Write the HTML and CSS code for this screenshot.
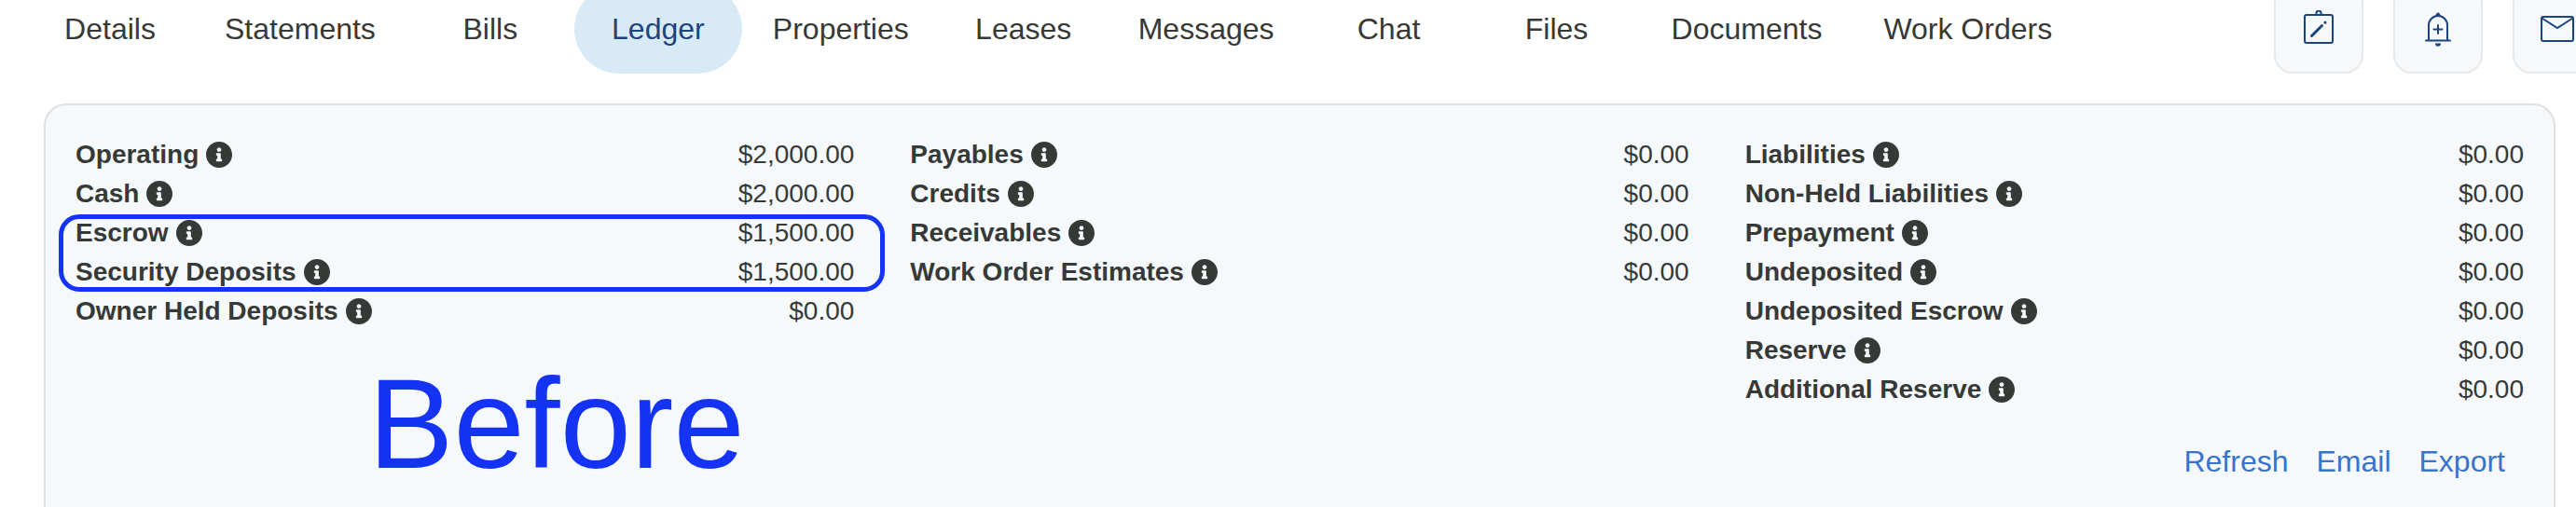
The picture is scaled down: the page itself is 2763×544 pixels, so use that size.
FILE: index.html
```html
<!DOCTYPE html>
<html lang="en">
<head>
    <meta charset="utf-8">
    <title>Ledger</title>
    <link rel="stylesheet" href="styles.css">
</head>
<body>
    <svg class="sprite" aria-hidden="true">
        <symbol id="info" viewBox="8 8 496 496">
            <path fill="currentColor" d="M256 8C119 8 8 119 8 256c0 137 111 248 248 248s248-111 248-248C504 119 393 8 256 8zm0 110c23.2 0 42 18.800 42 42s-18.800 42-42 42-42-18.800-42-42 18.800-42 42-42zm56 254c0 6.600-5.400 12-12 12h-88c-6.600 0-12-5.400-12-12v-24c0-6.600 5.400-12 12-12h12v-64h-12c-6.600 0-12-5.400-12-12v-24c0-6.600 5.400-12 12-12h64c6.600 0 12 5.400 12 12v100h12c6.600 0 12 5.400 12 12v24z"/>
        </symbol>
    </svg>

    <header class="header">
        <nav class="tabs">
            <a class="tab" href="#details">Details</a>
            <a class="tab" href="#statements">Statements</a>
            <a class="tab" href="#bills">Bills</a>
            <a class="tab active" href="#ledger">Ledger</a>
            <a class="tab" href="#properties">Properties</a>
            <a class="tab" href="#leases">Leases</a>
            <a class="tab" href="#messages">Messages</a>
            <a class="tab" href="#chat">Chat</a>
            <a class="tab" href="#files">Files</a>
            <a class="tab" href="#documents">Documents</a>
            <a class="tab" href="#work-orders">Work Orders</a>
        </nav>
        <div class="actions">
            <button class="icon-button" aria-label="Add note">
                <svg viewBox="0 0 40 40" fill="none" stroke="currentColor" stroke-width="2" stroke-linecap="round">
                    <rect x="5" y="5" width="30" height="30" rx="2"/>
                    <path d="M17.5 4.500V3a2.500 2.500 0 0 1 5 0v1.500"/>
                    <path stroke-width="3" d="M12.5 27.500L23.500 16.500M27 13.200V13.100"/>
                </svg>
            </button>
            <button class="icon-button" aria-label="Add reminder">
                <svg viewBox="0 0 40 40" fill="none" stroke="currentColor" stroke-width="2" stroke-linecap="round">
                    <path d="M10 32V16a10 10 0 0 1 20 0v16"/>
                    <path d="M7 32.500h26M20 16v9M15.500 20.500h9"/>
                    <path stroke="none" fill="currentColor" d="M17 6c0-1 1-1.300 1.300-2.200a1.800 1.800 0 0 1 3.400 0c.3.900 1.300 1.200 1.300 2.200zM17 35.500h6a3 3.200 0 0 1-6 0z"/>
                </svg>
            </button>
            <button class="icon-button" aria-label="Send email">
                <svg viewBox="0 0 40 40" fill="none" stroke="currentColor" stroke-width="2">
                    <rect x="3" y="7" width="34" height="26" rx="2"/>
                    <path d="M3.500 8.500L20 19l16.500-10.500"/>
                </svg>
            </button>
        </div>
    </header>

    <main class="card">
        <div class="columns">
            <dl class="column">
                <div class="row"><dt>Operating <svg class="info"><use href="#info"/></svg></dt><dd>$2,000.00</dd></div>
                <div class="row"><dt>Cash <svg class="info"><use href="#info"/></svg></dt><dd>$2,000.00</dd></div>
                <div class="row marked"><dt>Escrow <svg class="info"><use href="#info"/></svg></dt><dd>$1,500.00</dd></div>
                <div class="row"><dt>Security Deposits <svg class="info"><use href="#info"/></svg></dt><dd>$1,500.00</dd></div>
                <div class="row"><dt>Owner Held Deposits <svg class="info"><use href="#info"/></svg></dt><dd>$0.00</dd></div>
            </dl>
            <dl class="column">
                <div class="row"><dt>Payables <svg class="info"><use href="#info"/></svg></dt><dd>$0.00</dd></div>
                <div class="row"><dt>Credits <svg class="info"><use href="#info"/></svg></dt><dd>$0.00</dd></div>
                <div class="row"><dt>Receivables <svg class="info"><use href="#info"/></svg></dt><dd>$0.00</dd></div>
                <div class="row"><dt>Work Order Estimates <svg class="info"><use href="#info"/></svg></dt><dd>$0.00</dd></div>
            </dl>
            <dl class="column">
                <div class="row"><dt>Liabilities <svg class="info"><use href="#info"/></svg></dt><dd>$0.00</dd></div>
                <div class="row"><dt>Non-Held Liabilities <svg class="info"><use href="#info"/></svg></dt><dd>$0.00</dd></div>
                <div class="row"><dt>Prepayment <svg class="info"><use href="#info"/></svg></dt><dd>$0.00</dd></div>
                <div class="row"><dt>Undeposited <svg class="info"><use href="#info"/></svg></dt><dd>$0.00</dd></div>
                <div class="row"><dt>Undeposited Escrow <svg class="info"><use href="#info"/></svg></dt><dd>$0.00</dd></div>
                <div class="row"><dt>Reserve <svg class="info"><use href="#info"/></svg></dt><dd>$0.00</dd></div>
                <div class="row"><dt>Additional Reserve <svg class="info"><use href="#info"/></svg></dt><dd>$0.00</dd></div>
            </dl>
        </div>
        <div class="links">
            <button>Refresh</button>
            <button>Email</button>
            <button>Export</button>
        </div>
        <div class="note">Before</div>
    </main>
</body>
</html>
```

FILE: styles.css
```css
*,
*::after {
    box-sizing: border-box;
    margin: 0;
    padding: 0;
}

body {
    height: 100vh;
    overflow: hidden;
    background: #fff;
    color: #373936;
    font-family: "Liberation Sans", Arial, sans-serif;
}

.sprite {
    position: absolute;
    width: 0;
    height: 0;
}

/* the bar is scrolled partly out of view, its items hang from the bottom */
.header {
    display: flex;
    align-items: flex-end;
    justify-content: space-between;
    height: 79px;
    padding-left: 28px;
    margin-right: -28px;
}

.tabs {
    display: flex;
}

.tab {
    min-width: 180px;
    padding: 0 33px;
    border-radius: 48px;
    font-size: 32px;
    line-height: 96px;
    color: inherit;
    text-align: center;
    text-decoration: none;
    white-space: nowrap;
}

.tab.active {
    background: #d8eaf6;
    color: #1c447e;
}

.actions {
    display: flex;
    gap: 32px;
}

.icon-button {
    display: flex;
    align-items: center;
    justify-content: center;
    width: 96px;
    height: 96px;
    border: 2px solid #e8e8e8;
    border-radius: 20px;
    background: #f5f9fc;
    color: #1c447e;
    cursor: pointer;
}

.icon-button svg {
    width: 40px;
    height: 40px;
}

.card {
    position: relative;
    margin: 32px 22px 0 47px;
    padding: 32px 32px 64px;
    border: 2px solid #e0e0e0;
    border-radius: 24px;
    background: #f5f9fc;
}

.columns {
    display: grid;
    grid-template-columns: repeat(3, 1fr);
    gap: 60px;
}

.row {
    display: flex;
    justify-content: space-between;
    font-size: 28px;
    line-height: 42px;
}

.row dt {
    display: flex;
    align-items: center;
    gap: 8px;
    font-weight: bold;
}

.info {
    width: 28px;
    height: 28px;
}

.marked {
    position: relative;
}

/* outline drawn round this row and the next one */
.marked::after {
    content: '';
    position: absolute;
    top: 1px;
    left: -18px;
    right: -33px;
    height: 83px;
    border: 5px solid #1433f5;
    border-radius: 22px;
    pointer-events: none;
}

.links {
    display: flex;
    justify-content: flex-end;
    gap: 30px;
    margin-top: 36px;
    padding-right: 20px;
}

.links button {
    border: none;
    background: none;
    color: #3874cb;
    font-family: inherit;
    font-size: 32px;
    line-height: 40px;
    cursor: pointer;
}

.note {
    position: absolute;
    top: 273px;
    left: 346px;
    color: #1433f5;
    font-size: 137px;
    line-height: 1;
}
```
